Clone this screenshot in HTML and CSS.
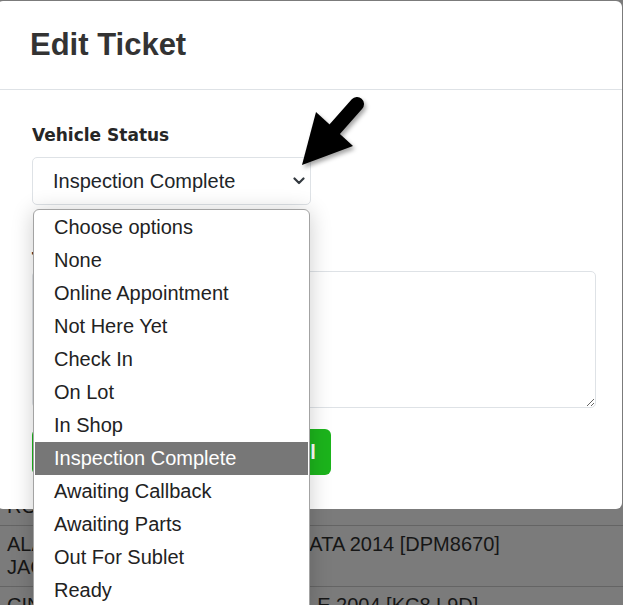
FILE: index.html
```html
<!DOCTYPE html>
<html lang="en">
	<head>
		<meta charset="UTF-8" />
		<meta name="viewport" content="width=device-width, initial-scale=1.0" />
		<title>Edit Ticket</title>

		<link rel="stylesheet" href="styles.css">
	</head>

	<body>
		<div class="ticket-table">
			<div class="ticket-row">
				<span class="col-name">ROSS MILLER</span>
				<span class="col-vehicle"></span>
			</div>
			<div class="ticket-row">
				<span class="col-name">ALAN<br />JACKSON</span>
				<span class="col-vehicle">SONATA 2014 [DPM8670]</span>
			</div>
			<div class="ticket-row">
				<span class="col-name">CINDY</span>
				<span class="col-vehicle">SABLE 2004 [KC8 L9D]</span>
			</div>
		</div>

		<div class="modal">
			<div class="modal-header">
				<h4>Edit Ticket</h4>
			</div>
			<div class="modal-body">
				<label class="field-label">Vehicle Status</label>
				<div class="status-select">
					<span>Inspection Complete</span>
					<svg class="status-select__chevron" width="12" height="8" viewBox="0 0 12 8">
						<path d="M1.5 1.5 L6 6 L10.5 1.5" fill="none" stroke="#343a40" stroke-width="2.2" stroke-linecap="round" stroke-linejoin="round" />
					</svg>
				</div>
				<label class="field-label notes-label">Technician Notes</label>
				<textarea class="notes"></textarea>
				<div class="btn-row">
					<button class="btn btn-save">Save Changes</button>
					<button class="btn btn-cancel">Cancel</button>
				</div>
			</div>
		</div>

		<ul class="status-options">
			<li>Choose options</li>
			<li>None</li>
			<li>Online Appointment</li>
			<li>Not Here Yet</li>
			<li>Check In</li>
			<li>On Lot</li>
			<li>In Shop</li>
			<li class="is-selected">Inspection Complete</li>
			<li>Awaiting Callback</li>
			<li>Awaiting Parts</li>
			<li>Out For Sublet</li>
			<li>Ready</li>
		</ul>

		<svg class="pointer-arrow" width="80" height="85" viewBox="0 0 80 85">
			<line x1="44" y1="40" x2="67" y2="14" stroke="#000" stroke-width="14" stroke-linecap="round" />
			<polygon points="12,75 26,22 63,56" fill="#000" />
		</svg>
	</body>
</html>
```

FILE: styles.css
```css
* {
	margin: 0;
	box-sizing: border-box;
}

body {
	background: #7b7b7b;
	font-family: "Liberation Sans", Arial, sans-serif;
	color: #212529;
	height: 605px;
	overflow: hidden;
	position: relative;
}

/* page behind the backdrop */
.ticket-table {
	padding-top: 488px;
}

.ticket-row {
	display: flex;
	padding: 7px;
	border-bottom: 1px solid #646464;
	font-size: 20px;
	line-height: 23px;
	color: #161616;
}

.col-name {
	width: 259px;
}

/* modal */
.modal {
	position: absolute;
	top: 1px;
	left: -3px;
	width: 625px;
	background: #fff;
	border-radius: 6px;
}

.modal-header {
	padding: 25px 0 26px 33px;
	border-bottom: 1px solid #dee2e6;
}

.modal-header h4 {
	font-size: 31px;
	line-height: 37px;
	font-weight: bold;
	color: #333;
}

.modal-body {
	display: flex;
	flex-direction: column;
	align-items: flex-start;
	padding: 35px 26px 34px 35px;
}

.field-label {
	font-family: "DejaVu Sans", sans-serif;
	font-weight: bold;
	font-size: 17px;
	line-height: 20px;
	color: #262626;
}

.status-select {
	margin-top: 12px;
	width: 279px;
	height: 48px;
	padding: 11px 5px 11px 20px;
	border: 1px solid #dee2e6;
	border-radius: 5px;
	display: flex;
	align-items: center;
	justify-content: space-between;
	font-size: 20px;
	line-height: 24px;
	color: #212529;
}

.notes-label {
	margin-top: 44px;
}

.notes {
	margin-top: 2px;
	width: 564px;
	height: 137px;
	border: 1px solid #dee2e6;
	border-radius: 5px;
	resize: vertical;
	font: inherit;
}

.btn-row {
	margin-top: 21px;
	display: flex;
	gap: 8px;
}

.btn {
	height: 46px;
	border: none;
	border-radius: 6px;
	background: #1cb41c;
	color: #fff;
	font-family: "Liberation Sans", Arial, sans-serif;
	font-weight: bold;
	font-size: 20px;
	padding: 0 15px;
}

.btn-save {
	width: 195px;
}

.btn-cancel {
	width: 96px;
}

/* open native option list */
.status-options {
	position: absolute;
	top: 209px;
	left: 33px;
	width: 277px;
	list-style: none;
	padding: 1px;
	background: #fff;
	border: 1px solid #a3a3a3;
	border-radius: 6px 6px 0 0;
	box-shadow: 0 2px 22px rgba(0, 0, 0, 0.2);
}

.status-options li {
	height: 33px;
	line-height: 33px;
	padding-left: 19px;
	font-size: 20px;
	color: #222;
}

.status-options li.is-selected {
	background: #777;
	color: #fff;
}

.pointer-arrow {
	position: absolute;
	left: 290px;
	top: 90px;
	filter: drop-shadow(2px 3px 2px rgba(0, 0, 0, 0.35));
}
```
